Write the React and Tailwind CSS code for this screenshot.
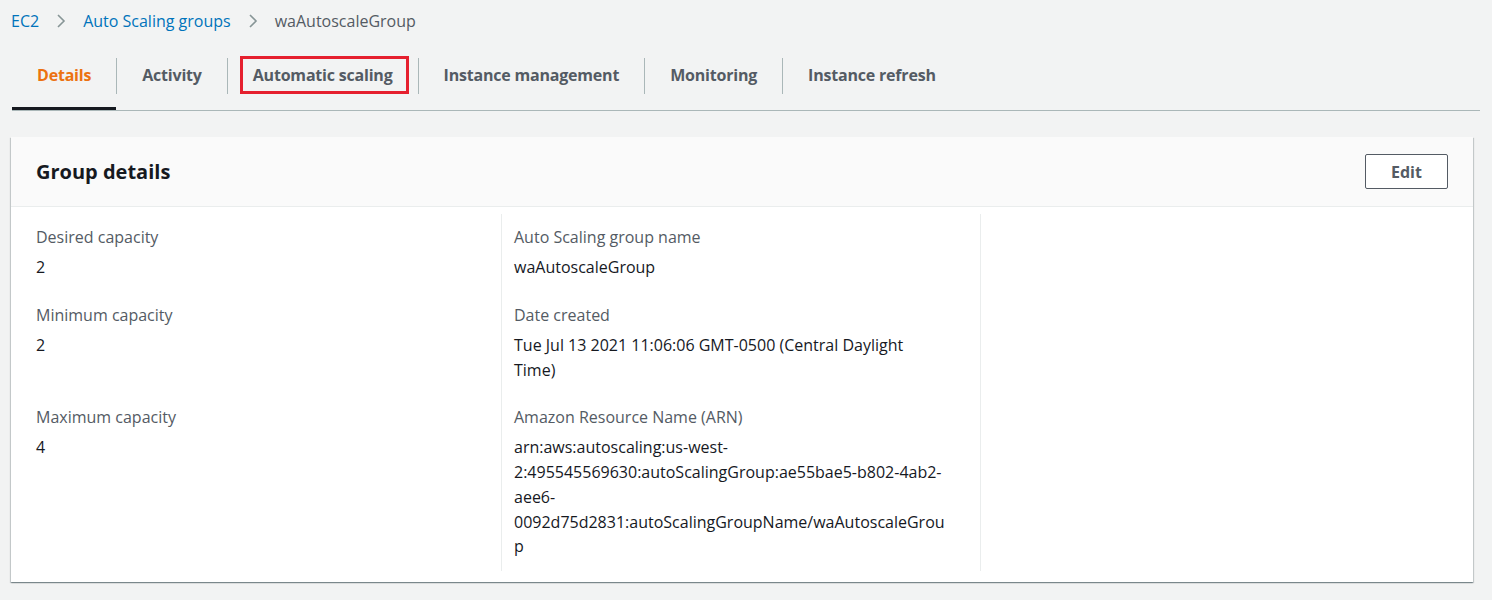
import React from 'react';

const tabs = ['Details', 'Activity', 'Automatic scaling', 'Instance management', 'Monitoring', 'Instance refresh'];

const rows = [
  [
    { label: 'Desired capacity', value: '2' },
    { label: 'Auto Scaling group name', value: 'waAutoscaleGroup' },
  ],
  [
    { label: 'Minimum capacity', value: '2' },
    { label: 'Date created', value: ['Tue Jul 13 2021 11:06:06 GMT-0500 (Central Daylight', 'Time)'] },
  ],
  [
    { label: 'Maximum capacity', value: '4' },
    {
      label: 'Amazon Resource Name (ARN)',
      value: [
        'arn:aws:autoscaling:us-west-',
        '2:495545569630:autoScalingGroup:ae55bae5-b802-4ab2-',
        'aee6-',
        '0092d75d2831:autoScalingGroupName/waAutoscaleGrou',
        'p',
      ],
    },
  ],
];

const Chevron = () => (
  <svg className="mx-[16px] w-[12px] h-[16px]" viewBox="0 0 12 16" fill="none">
    <path d="M3 2l6 6-6 6" stroke="#879596" strokeWidth="1.6" />
  </svg>
);

const Cell = ({ field, first, last, col }) => (
  <div
    className={`${col === 0 ? 'pl-[14px]' : 'border-l border-[#eaeded] pl-[12px]'} pr-[10px] ${
      first ? 'pt-[12px]' : ''
    } ${last ? 'pb-[12px]' : 'pb-[24px]'}`}
  >
    {field && (
      <>
        <div className="text-[#545b64] leading-[22px]">{field.label}</div>
        <div className="text-[#16191f] leading-[24.75px] mt-[7px]">
          {Array.isArray(field.value)
            ? field.value.map((line, i) => <div key={i}>{line}</div>)
            : field.value}
        </div>
      </>
    )}
  </div>
);

const App = () => {
  return (
    <div className="min-h-[600px] bg-[#f2f3f3] text-[16px] font-['Open_Sans',sans-serif]">
      {/* breadcrumb */}
      <div className="flex items-center h-[42px] pl-[11px]">
        <span className="text-[#0073bb]">EC2</span>
        <Chevron />
        <span className="text-[#0073bb]">Auto Scaling groups</span>
        <Chevron />
        <span className="text-[#545b64]">waAutoscaleGroup</span>
      </div>

      {/* tabs */}
      <div className="mx-[12px] flex items-stretch h-[69px] border-b border-[#aab7b8]">
        {tabs.map((t, i) => (
          <div key={t} className="flex items-center">
            {i > 0 && <div className="w-px h-[36px] bg-[#aab7b8]" />}
            <div
              className={`h-full flex items-center px-[25px] pb-[2px] font-bold tracking-[-0.2px] ${
                i === 0 ? 'text-[#ec7211] border-b-[3px] border-[#16191f] pt-[3px]' : 'text-[#545b64]'
              }`}
            >
              {i === 2 ? (
                <span className="border-[3px] border-[#e5202e] pl-[10px] pr-[13px] py-[4px] -ml-[13px] -mr-[16px]">{t}</span>
              ) : (
                t
              )}
            </div>
          </div>
        ))}
      </div>

      {/* card */}
      <div className="ml-[11px] mr-[19px] mt-[26px] bg-white shadow-[0_1px_1px_0_rgba(0,28,36,0.3),1px_1px_1px_0_rgba(0,28,36,0.15),-1px_1px_1px_0_rgba(0,28,36,0.15)]">
        <div className="h-[70px] bg-[#fafafa] border-b border-[#eaeded] flex items-center justify-between px-[25px]">
          <h2 className="text-[20px] font-bold text-[#16191f]">Group details</h2>
          <button className="w-[83px] h-[35px] border border-[#545b64] rounded-[2px] bg-white text-[#545b64] font-bold">
            Edit
          </button>
        </div>
        <div className="grid grid-cols-3 pl-[11px] pr-[14px] pt-[7px] pb-[11px]">
          {rows.map((row, r) =>
            [0, 1, 2].map((c) => (
              <Cell key={`${r}-${c}`} field={row[c]} col={c} first={r === 0} last={r === rows.length - 1} />
            ))
          )}
        </div>
      </div>
    </div>
  );
};

export default App;
